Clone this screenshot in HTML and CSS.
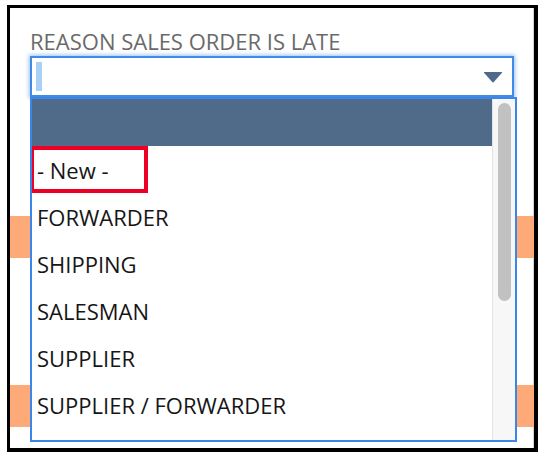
FILE: index.html
```html
<!DOCTYPE html>
<html lang="en">
<head>
<meta charset="utf-8">
<title>Reason Sales Order Is Late</title>
<link rel="stylesheet" href="styles.css">
</head>
<body>
<div class="frame">
  <div class="field">
    <div class="label">REASON SALES ORDER IS LATE</div>
    <div class="input">
      <span class="caret"></span>
      <svg class="arrow" width="20" height="12" viewBox="0 0 20 12"><path d="M1.5 1 H18.5 Q19.6 1 18.8 2 L10.8 11 Q10 11.8 9.2 11 L1.2 2 Q0.4 1 1.5 1 Z" fill="#4e6a8a"/></svg>
    </div>
  </div>
  <div class="bg-row bg-row-1"></div>
  <div class="bg-row bg-row-2"></div>

  <div class="dropdown">
    <ul class="options">
      <li class="option selected"></li>
      <li class="option new"><span>- New -</span><span class="mark"></span></li>
      <li class="option">FORWARDER</li>
      <li class="option">SHIPPING</li>
      <li class="option">SALESMAN</li>
      <li class="option">SUPPLIER</li>
      <li class="option">SUPPLIER / FORWARDER</li>
      <li class="option"></li>
    </ul>
    <div class="track"><div class="thumb"></div></div>
  </div>
</div>
</body>
</html>
```
FILE: styles.css
```css
* { box-sizing: border-box; }
html, body { margin: 0; padding: 0; background: #fff; }
body { font-family: "Open Sans", "DejaVu Sans", sans-serif; }

.frame {
  position: relative;
  margin: 5px 0 0 7px;
  width: 531px;
  height: 447px;
  border-style: solid;
  border-color: #000;
  border-width: 3px 4px 4px 3px;
  background: #fff;
  box-shadow: inset -1px 0 0 #d4d4d4;
  overflow: hidden;
}

.field { padding: 18px 20px 0 20px; }

.label {
  font-size: 22px;
  line-height: 30px;
  height: 30px;
  color: #6a6a6a;
  white-space: nowrap;
}

.input {
  position: relative;
  display: flex;
  align-items: center;
  justify-content: space-between;
  width: 484px;
  height: 41px;
  border: 2px solid #3f8ce8;
  box-shadow: 0 0 4px 1px rgba(64, 140, 232, 0.55);
  padding: 0 9px 0 4px;
  background: #fff;
}
.caret {
  display: block;
  width: 6px;
  height: 29px;
  background: #a9d1f8;
}
.arrow { display: block; margin-top: 1px; }

.bg-row {
  height: 42px;
  background: #fda978;
}
.bg-row-1 { margin-top: 119px; }
.bg-row-2 { margin-top: 127px; }

.dropdown {
  position: absolute;
  top: 89px;
  left: 20px;
  width: 487px;
  height: 345px;
  border: 2px solid #3b87e9;
  background: #fff;
  display: grid;
  grid-template-columns: 1fr 23px;
  overflow: hidden;
}

.options {
  list-style: none;
  margin: 0;
  padding: 0;
}
.option {
  position: relative;
  height: 47px;
  padding: 2px 0 0 5px;
  font-size: 22px;
  line-height: 45px;
  color: #161616;
  white-space: nowrap;
}
.option.selected { background: #506a89; }

.mark {
  position: absolute;
  left: -2px;
  top: 0;
  width: 118px;
  height: 47px;
  border: 4px solid #ee0024;
}

.track {
  background: #f7f7f7;
  border-left: 1px solid #e4e4e4;
  padding: 4px 0 0 5px;
}
.thumb {
  width: 13px;
  height: 198px;
  border-radius: 7px;
  background: #c1c1c1;
}
```
